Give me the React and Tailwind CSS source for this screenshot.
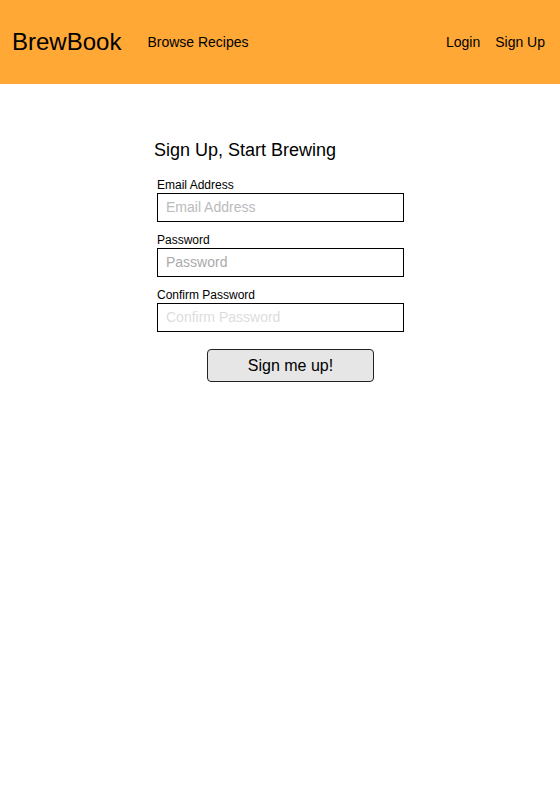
export default function App() {
  return (
    <div className="min-h-[806px] bg-white text-black font-['Liberation_Sans',Arial,sans-serif]">
      <header className="h-[84px] bg-[#ffa836] flex items-center px-3">
        <a className="text-[24px] leading-none">BrewBook</a>
        <a className="ml-[26px] text-[14px]">Browse Recipes</a>
        <div className="flex-1"></div>
        <nav className="flex items-center gap-[15px] pr-[3px] text-[14px]">
          <a>Login</a>
          <a>Sign Up</a>
        </nav>
      </header>

      <main className="pt-[55px]">
        <form className="w-[250px] mx-auto" onSubmit={(e) => e.preventDefault()}>
          <h2 className="text-[18px] leading-[22px] -ml-[1px]">Sign Up, Start Brewing</h2>

          <div className="mt-[17px] pl-[2px]">
            <label className="block text-[12px] leading-[14px]">Email Address</label>
            <input
              type="email"
              placeholder="Email Address"
              className="mt-[1px] block w-[247px] h-[29px] border border-black px-[8px] pb-[2px] text-[14px] placeholder:text-[#bbbbbb] outline-none"
            />
          </div>

          <div className="mt-[11px] pl-[2px]">
            <label className="block text-[12px] leading-[14px]">Password</label>
            <input
              type="password"
              placeholder="Password"
              className="mt-[1px] block w-[247px] h-[29px] border border-black px-[8px] pb-[2px] text-[14px] placeholder:text-[#aaaaaa] outline-none"
            />
          </div>

          <div className="mt-[11px] pl-[2px]">
            <label className="block text-[12px] leading-[14px]">Confirm Password</label>
            <input
              type="password"
              placeholder="Confirm Password"
              className="mt-[1px] block w-[247px] h-[29px] border border-black px-[8px] pb-[2px] text-[14px] placeholder:text-[#dddddd] outline-none"
            />
          </div>

          <button
            type="submit"
            className="mt-[17px] ml-[52px] w-[167px] h-[33px] bg-[#e6e6e6] border border-[#222] rounded-[4px] text-[16px]"
          >
            Sign me up!
          </button>
        </form>
      </main>
    </div>
  );
}
